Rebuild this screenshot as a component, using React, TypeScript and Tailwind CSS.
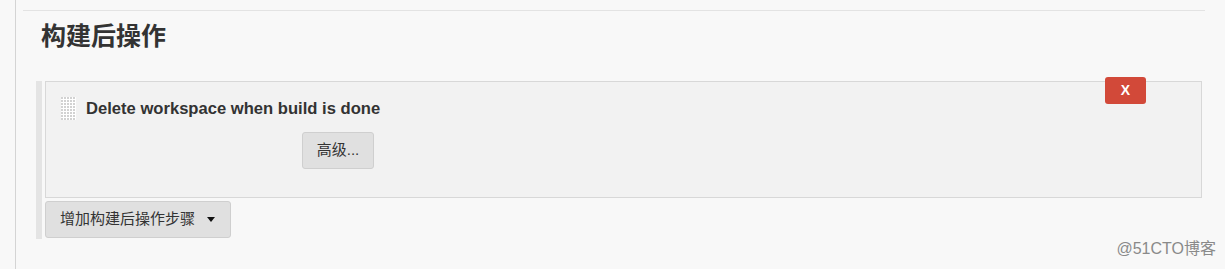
import React from "react";

function DragHandle() {
  return (
    <svg width="15" height="23" viewBox="0 0 15 23" className="shrink-0">
      <defs>
        <pattern id="dots" width="3" height="3" patternUnits="userSpaceOnUse">
          <rect width="3" height="3" fill="#ffffff" />
          <rect x="0" y="0" width="2" height="2" fill="#d2d2d2" />
        </pattern>
      </defs>
      <rect width="15" height="23" fill="url(#dots)" />
    </svg>
  );
}

export default function App() {
  return (
    <div className="relative h-[269px] w-[1225px] bg-[#f8f8f8] pl-[15px] font-['Liberation_Sans','Noto_Sans_CJK_SC',sans-serif] text-[#333]">
      <div className="h-full border-l border-[#d4d4d4] pl-[7px] pr-[20px] pt-[10px]">
        <div className="border-t border-[#e3e3e3]" />
        <h2 className="ml-[18px] mt-[9px] text-[25px] font-bold leading-[32px] text-[#333]">
          构建后操作
        </h2>
        <div className="ml-[13px] mt-[29px] border-l-[6px] border-[#e4e4e4] pb-[1px] pl-[3px]">
          <div className="relative mr-[3px] h-[117px] border border-[#d8d8d8] bg-[#f2f2f2]">
            <div className="flex items-center gap-[10px] pl-[15px] pt-[15px]">
              <DragHandle />
              <span className="text-[16.6px] font-bold leading-[18px] text-[#333]">
                Delete workspace when build is done
              </span>
            </div>
            <div className="ml-[256px] mt-[12px]">
              <button className="h-[37px] w-[72px] rounded-[3px] border border-[#cfcfcf] bg-[#e0e0e0] text-[15px] text-[#333]">
                高级...
              </button>
            </div>
            <button className="absolute right-[55px] top-[-5px] flex h-[27px] w-[41px] items-center justify-center rounded-[3px] bg-[#d24939] text-[14px] font-bold text-white">
              X
            </button>
          </div>
          <button className="mt-[3px] flex h-[37px] w-[186px] items-center rounded-[3px] border border-[#cfcfcf] bg-[#e0e0e0] pl-[14px] text-[15px] text-[#333]">
            增加构建后操作步骤
            <svg width="8" height="5" viewBox="0 0 8 5" className="ml-[12px]">
              <path d="M0 0 H8 L4 5 Z" fill="#111" />
            </svg>
          </button>
        </div>
      </div>
      <div className="absolute right-[9px] top-[240px] text-[16px] leading-[18px] text-[#8a8a8a]">
        @51CTO博客
      </div>
    </div>
  );
}
